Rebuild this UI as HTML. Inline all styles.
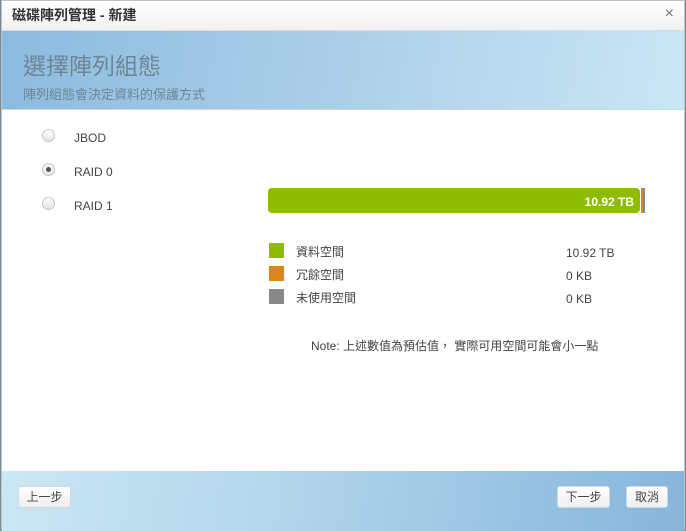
<!DOCTYPE html>
<html><head><meta charset="utf-8"><style>
*{margin:0;padding:0;box-sizing:border-box}
body{width:686px;height:530px;overflow:hidden;background:#7a8a95;font-family:"Liberation Sans","Noto Sans CJK TC",sans-serif;position:relative}
.dlg{position:absolute;left:1px;top:0px;width:684px;height:530px;background:#fff;border:1px solid #b9c3c9;}
.title{position:absolute;left:0;top:0;width:100%;height:30px;background:linear-gradient(#fff,#f1f1f1);border-bottom:1px solid #ddd;}
.title span{position:absolute;left:10px;top:4px;font-size:14px;font-weight:bold;color:#333}
.title .x{position:absolute;right:10px;top:4px;font-size:16px;color:#777;font-weight:normal;left:auto}
.hdr{position:absolute;left:0;top:30px;width:100%;height:79px;background:linear-gradient(100deg,#8bbbdf 0%,#a9cde8 45%,#c9e6f4 100%);border-bottom:1px solid #c8d8e2}
.hdr h1{position:absolute;left:21px;top:16px;font-size:23px;font-weight:normal;color:#6f8595}
.hdr p{position:absolute;left:21px;top:53px;font-size:13px;color:#6f8595}
.r{position:absolute;left:40px;width:13px;height:13px;border-radius:50%;border:1px solid #c5c5c5;background:linear-gradient(#fff,#e4e4e4)}
.r.on::after{content:"";position:absolute;left:3px;top:3px;width:5px;height:5px;border-radius:50%;background:#555}
.lb{position:absolute;left:72px;font-size:12px;color:#444}
.bar{position:absolute;left:266px;top:187px;width:372px;height:25px;background:#8fbc00;border-radius:4px;color:#fff;font-weight:bold;font-size:12px;text-align:right;padding:7px 6px 0 0}
.sq{position:absolute;left:267px;width:15px;height:15px}
.lt{position:absolute;left:294px;font-size:12px;color:#444}
.lv{position:absolute;left:564px;font-size:12px;color:#444}
.ftr{position:absolute;left:0;top:470px;width:100%;height:60px;background:linear-gradient(100deg,#cae7f4 0%,#b3d6eb 40%,#86b5db 100%)}
.btn{position:absolute;top:15px;height:22px;border:1px solid #cfdbe4;border-radius:3px;background:linear-gradient(#fff,#efefef);font-size:12px;color:#444;text-align:center;line-height:20px}
</style></head><body>
<div class="dlg">
<div class="title"><span>磁碟陣列管理 - 新建</span><span class="x">×</span></div>
<div class="hdr"><h1>選擇陣列組態</h1><p>陣列組態會決定資料的保護方式</p></div>
<div class="r" style="top:128px"></div><div class="lb" style="top:130px">JBOD</div>
<div class="r on" style="top:162px"></div><div class="lb" style="top:164px">RAID 0</div>
<div class="r" style="top:196px"></div><div class="lb" style="top:198px">RAID 1</div>
<div class="bar">10.92 TB</div>
<div style="position:absolute;left:639px;top:187px;width:2px;height:25px;background:#d9861a"></div>
<div style="position:absolute;left:641px;top:187px;width:2px;height:25px;background:#888"></div>
<div class="sq" style="top:242px;background:#8fbc00"></div><div class="lt" style="top:242px">資料空間</div><div class="lv" style="top:245px">10.92 TB</div>
<div class="sq" style="top:265px;background:#d9861a"></div><div class="lt" style="top:265px">冗餘空間</div><div class="lv" style="top:268px">0 KB</div>
<div class="sq" style="top:288px;background:#888"></div><div class="lt" style="top:288px">未使用空間</div><div class="lv" style="top:291px">0 KB</div>
<div style="position:absolute;left:309px;top:336px;font-size:12px;color:#444">Note: 上述數值為預估值， 實際可用空間可能會小一點</div>
<div class="ftr">
<div class="btn" style="left:16px;width:53px">上一步</div>
<div class="btn" style="left:555px;width:53px">下一步</div>
<div class="btn" style="left:624px;width:42px">取消</div>
</div>
</div>
</body></html>
